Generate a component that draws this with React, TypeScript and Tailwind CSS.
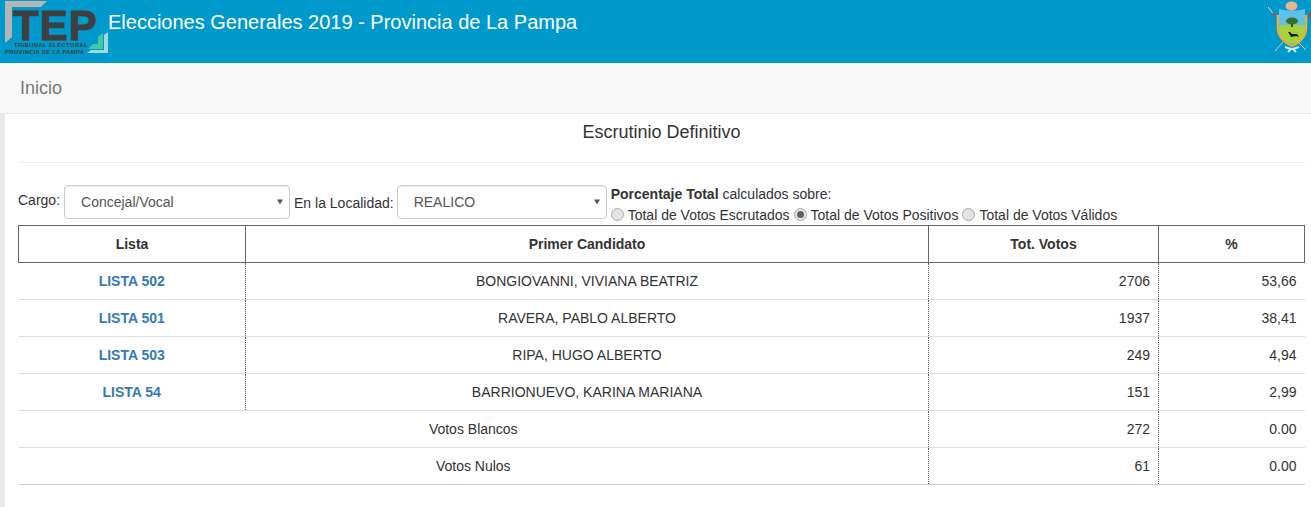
const rows = [
  { lista: 'LISTA 502', candidato: 'BONGIOVANNI, VIVIANA BEATRIZ', votos: 2706, pct: '53,66' },
  { lista: 'LISTA 501', candidato: 'RAVERA, PABLO ALBERTO', votos: 1937, pct: '38,41' },
  { lista: 'LISTA 503', candidato: 'RIPA, HUGO ALBERTO', votos: 249, pct: '4,94' },
  { lista: 'LISTA 54', candidato: 'BARRIONUEVO, KARINA MARIANA', votos: 151, pct: '2,99' },
];

function Radio({ label, checked }: { label: string; checked?: boolean }) {
  return (
    <label className="flex items-center">
      <span className="mb-[2px] mr-[4px] flex h-[13px] w-[13px] items-center justify-center rounded-full border border-[#a9a9a9] bg-[#e3e3e3]">
        {checked && <span className="h-[7px] w-[7px] rounded-full bg-[#5f5f5f]" />}
      </span>
      {label}
    </label>
  );
}

function Select({ value, width }: { value: string; width: string }) {
  return (
    <div className={`relative shrink-0 ${width}`}>
      <select
        defaultValue={value}
        className="h-[34px] w-full appearance-none rounded-[4px] border border-[#ccc] bg-white pl-[16px] pr-[12px] text-[#555] shadow-[inset_0_1px_1px_rgba(0,0,0,0.075)]"
      >
        <option value={value}>{value}</option>
      </select>
      <svg className="pointer-events-none absolute right-[7px] top-[14px]" width="6" height="6" viewBox="0 0 6 6">
        <path d="M0 0.5 H6 L3 5.5 Z" fill="#555" />
      </svg>
    </div>
  );
}

function Logo() {
  return (
    <div className="relative h-[56px] w-[108px] shrink-0">
      <svg className="absolute left-0 top-0" width="108" height="56" viewBox="0 0 108 56">
        <path d="M5 43 L5 1 L47 1 L41 7 L12 7 L12 37 Z" fill="#b5b5b5" />
        <path d="M88 49 L93 44 L98 44 L98 37 L103 33 L103 49 Z" fill="#45c6a5" />
        <path d="M87 53 L91 50 L104 50 L104 35 L108 32 L108 53 Z" fill="#a5d9e2" />
      </svg>
      <span className="absolute left-[13px] top-[10px] text-[42px] font-bold leading-[32px] tracking-[1px] text-[#3f3f3f] [-webkit-text-stroke:1px_#3f3f3f]">TEP</span>
      <span className="absolute left-[14px] top-[42px] whitespace-nowrap text-[6px] font-bold leading-[6px] tracking-[0.3px] text-[#3f3f3f]">TRIBUNAL ELECTORAL</span>
      <span className="absolute left-[5px] top-[49px] whitespace-nowrap text-[6px] font-bold leading-[6px] tracking-[0.2px] text-[#3f3f3f]">PROVINCIA DE LA PAMPA</span>
    </div>
  );
}

function Escudo() {
  return (
    <svg width="43" height="56" viewBox="0 0 43 56" className="shrink-0">
      <path d="M0 7 L7 16" stroke="#e4e0c8" strokeWidth="1" />
      <path d="M5 13 L7 16" stroke="#e03030" strokeWidth="2" />
      <path d="M42 13 L42 17" stroke="#e03030" strokeWidth="2" />
      <path d="M7 51 L15 42 M38 50 L31 43" stroke="#d8cf9a" strokeWidth="1" />
      <ellipse cx="23.5" cy="6" rx="6" ry="4.5" fill="#e7b58c" />
      <path d="M11 9 C18 11 29 11 37 9 V28 C37 37 30 42 24 44 C18 42 11 37 11 28 Z" fill="#5fc0ec" />
      <path d="M11 26 C18 24 30 24 37 26 V28 C37 37 30 42 24 44 C18 42 11 37 11 28 Z" fill="#a5d23c" />
      <path d="M10 15 V28 C10 38 18 43 24 46 C30 43 38 38 38 28 V15" stroke="#e2b23c" strokeWidth="2.5" fill="none" />
      <rect x="23" y="22" width="2" height="5" fill="#4a3a20" />
      <ellipse cx="24" cy="21" rx="6" ry="3.5" fill="#33702c" />
      <path d="M20 32 L22 32 L24 34 L29 34 L31 37 L28 36 L23 37 L22 35 Z" fill="#1c1c1c" />
      <path d="M17 47 L23 49 L20 52 M31 47 L25 49 L28 52 M23 49 H25" stroke="#d4e8f5" strokeWidth="2" fill="none" />
    </svg>
  );
}

export default function App() {
  const th = 'border border-[#666] font-bold text-center align-middle';
  const cell = 'border-t border-[#ddd] align-middle';
  const dotted = 'border-r border-r-[#555] [border-right-style:dotted]';

  return (
    <div className="min-h-[507px] bg-white font-['Liberation_Sans',Arial,sans-serif] text-[14px] leading-[20px] text-[#333]">
      <header className="flex h-[63px] items-start justify-between overflow-hidden bg-[#0099cc]">
        <div className="flex items-start">
          <Logo />
          <h1 className="mt-[12px] text-[20px] leading-[20px] text-white">Elecciones Generales 2019 - Provincia de La Pampa</h1>
        </div>
        <Escudo />
      </header>

      <nav className="flex h-[51px] items-center border-b border-[#e7e7e7] bg-[#f8f8f8] px-[20px] text-[18px] text-[#777]">
        Inicio
      </nav>

      <div className="flex">
        <div className="w-[5px] shrink-0 self-stretch bg-[#e7ebee]" />
        <main className="min-w-0 flex-1 pb-[22px] pl-[13px] pr-[6px]">
          <h2 className="pt-[8px] text-center text-[18px] leading-[20px]">Escrutinio Definitivo</h2>
          <hr className="mb-[22px] mt-[20px] border-t border-[#eee]" />

          <div className="flex items-start">
            <span className="mr-[4px] mt-[5px]">Cargo:</span>
            <Select value="Concejal/Vocal" width="w-[226px]" />
            <span className="ml-[4px] mr-[3px] mt-[8px]">En la Localidad:</span>
            <Select value="REALICO" width="w-[210px]" />
            <div className="ml-[4px]">
              <div className="h-[20px] leading-[18px]"><b>Porcentaje Total</b> calculados sobre:</div>
              <div className="flex h-[20px] gap-[4px]">
                <Radio label="Total de Votos Escrutados" />
                <Radio label="Total de Votos Positivos" checked />
                <Radio label="Total de Votos Válidos" />
              </div>
            </div>
          </div>

          <table className="w-full table-fixed border-collapse">
            <colgroup>
              <col className="w-[227px]" />
              <col className="w-[683px]" />
              <col className="w-[230px]" />
              <col />
            </colgroup>
            <thead>
              <tr className="h-[37px]">
                <th className={th}>Lista</th>
                <th className={th}>Primer Candidato</th>
                <th className={th}>Tot. Votos</th>
                <th className={th}>%</th>
              </tr>
            </thead>
            <tbody>
              {rows.map((r) => (
                <tr key={r.lista} className="h-[37px]">
                  <td className={`${cell} ${dotted} text-center font-bold text-[#337ab7]`}>{r.lista}</td>
                  <td className={`${cell} ${dotted} text-center`}>{r.candidato}</td>
                  <td className={`${cell} ${dotted} pr-[8px] text-right`}>{r.votos}</td>
                  <td className={`${cell} pr-[8px] text-right`}>{r.pct}</td>
                </tr>
              ))}
              <tr className="h-[37px]">
                <td colSpan={2} className={`${cell} ${dotted} text-center`}>Votos Blancos</td>
                <td className={`${cell} ${dotted} pr-[8px] text-right`}>272</td>
                <td className={`${cell} pr-[8px] text-right`}>0.00</td>
              </tr>
              <tr className="h-[37px] border-b border-b-[#ccc]">
                <td colSpan={2} className={`${cell} ${dotted} text-center`}>Votos Nulos</td>
                <td className={`${cell} ${dotted} pr-[8px] text-right`}>61</td>
                <td className={`${cell} pr-[8px] text-right`}>0.00</td>
              </tr>
            </tbody>
          </table>
        </main>
      </div>
    </div>
  );
}
